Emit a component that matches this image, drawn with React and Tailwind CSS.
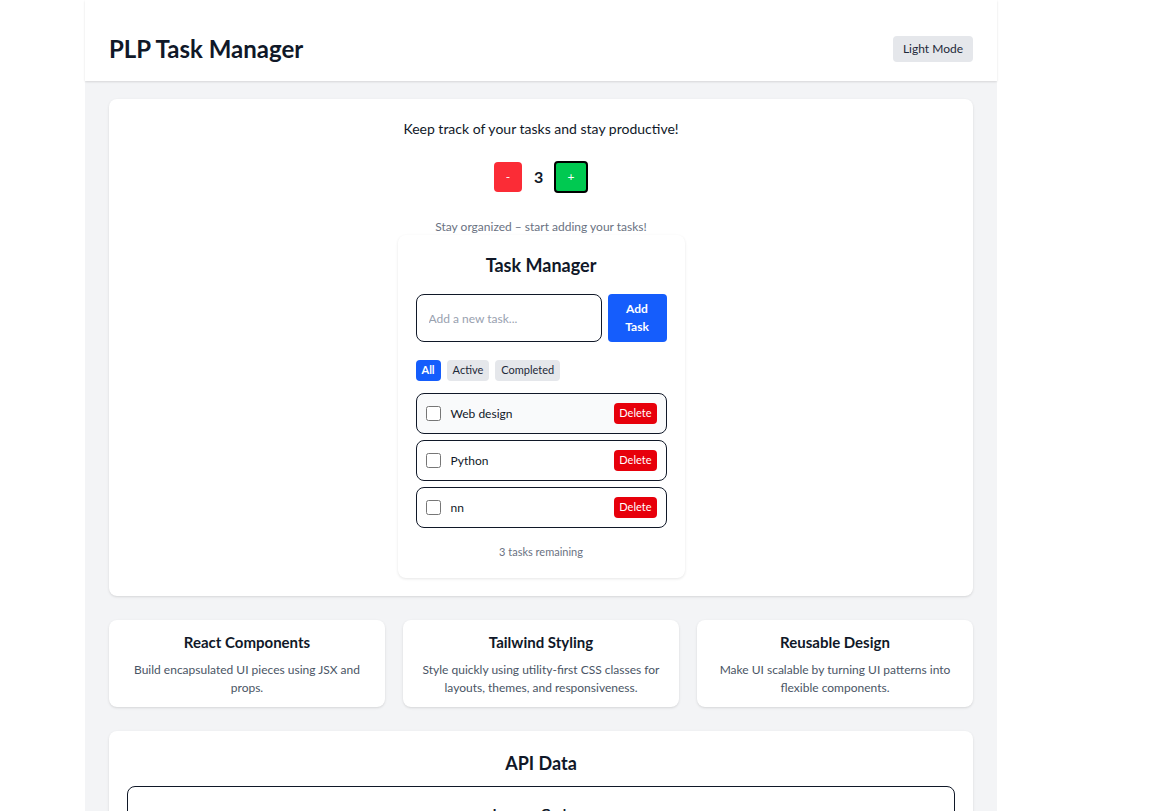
import { useState } from 'react'

const FEATURES = [
  { title: 'React Components', desc: 'Build encapsulated UI pieces using JSX and props.' },
  { title: 'Tailwind Styling', desc: 'Style quickly using utility-first CSS classes for layouts, themes, and responsiveness.' },
  { title: 'Reusable Design', desc: 'Make UI scalable by turning UI patterns into flexible components.' },
]

const TASKS = [
  { id: 1, text: 'Web design', hover: true },
  { id: 2, text: 'Python' },
  { id: 3, text: 'nn' },
]

export default function App() {
  const [count, setCount] = useState(3)

  return (
    <div className="min-h-screen bg-white text-gray-900" style={{ fontFamily: 'Lato, "Noto Sans", sans-serif' }}>
      <div className="ml-[85px] w-[912px] bg-gray-100">
        {/* header */}
        <header className="h-[81px] pt-[17px] bg-white shadow-[0_1px_2px_rgba(0,0,0,0.12)] px-6 flex items-center justify-between">
          <h1 className="text-[24px] font-bold text-gray-900">PLP Task Manager</h1>
          <button className="h-[26px] px-[10px] rounded bg-gray-200 text-[12px] text-gray-800">Light Mode</button>
        </header>

        <main className="px-6 pt-[18px] pb-6 space-y-6">
          {/* top card */}
          <section className="bg-white rounded-lg shadow-sm pt-[20px] pb-[18px] flex flex-col items-center">
            <p className="text-[14px] leading-5">Keep track of your tasks and stay productive!</p>

            <div className="mt-[22px] flex items-center gap-3">
              <button onClick={() => setCount(count - 1)} className="w-[28px] h-[30px] rounded bg-red-500 text-white text-xs">-</button>
              <span className="text-[16px] font-bold w-[8px] text-center">{count}</span>
              <button onClick={() => setCount(count + 1)} className="w-[34px] h-[32px] rounded border-2 border-black bg-green-500 text-white text-xs">+</button>
            </div>

            <p className="mt-[25px] text-[12px] text-gray-500">Stay organized – start adding your tasks!</p>

            {/* task manager */}
            <div className="w-[287px] bg-white rounded-lg shadow-[0_1px_3px_rgba(0,0,0,0.1)] px-[18px] pt-[17px] pb-[17px] -mt-[1px]">
              <h2 className="text-center text-[18px] font-bold">Task Manager</h2>
              <div className="mt-[15px] flex gap-[6px]">
                <input placeholder="Add a new task..." className="w-[186px] h-[48px] rounded-lg border border-gray-900 px-3 text-[12px] placeholder:text-gray-400 outline-none" />
                <button className="flex-1 h-[48px] rounded bg-blue-600 text-white text-[12px] font-bold leading-[18px]">Add<br />Task</button>
              </div>

              <div className="mt-[18px] flex gap-[6px] text-[11px]">
                <button className="h-[21px] px-[6px] rounded bg-blue-600 text-white font-bold">All</button>
                <button className="h-[21px] px-[6px] rounded bg-gray-200 text-gray-800">Active</button>
                <button className="h-[21px] px-[6px] rounded bg-gray-200 text-gray-800">Completed</button>
              </div>

              <ul className="mt-[12px] space-y-[6px]">
                {TASKS.map((t) => (
                  <li key={t.id} className={`h-[41px] rounded-lg border border-gray-900 flex items-center px-[9px] ${t.hover ? 'bg-gray-50' : 'bg-white'}`}>
                    <input type="checkbox" className="w-[15px] h-[15px] m-0" />
                    <span className="ml-[10px] text-[12px] flex-1">{t.text}</span>
                    <button className="h-[21px] px-[5px] rounded bg-red-600 text-white text-[11px]">Delete</button>
                  </li>
                ))}
              </ul>

              <p className="mt-[16px] text-center text-[11px] text-gray-500">3 tasks remaining</p>
            </div>
          </section>

          {/* feature cards */}
          <div className="grid grid-cols-3 gap-[18px]">
            {FEATURES.map((f) => (
              <div key={f.title} className="bg-white rounded-lg shadow-sm h-[87px] px-4 pt-[12px] text-center">
                <h3 className="text-[15px] font-bold leading-5">{f.title}</h3>
                <p className="mt-[9px] text-[12px] leading-[18px] text-gray-600">{f.desc}</p>
              </div>
            ))}
          </div>

          {/* api data */}
          <section className="bg-white rounded-lg shadow-sm px-[18px] pt-[20px] pb-6">
            <h2 className="text-center text-[18px] font-bold leading-6">API Data</h2>
            <div className="mt-[11px] rounded-lg border border-gray-900 p-4 text-center">
              <h3 className="text-[14px] font-bold">Leanne Graham</h3>
              <p className="text-[12px] text-gray-600">Sincere@april.biz</p>
            </div>
          </section>
        </main>
      </div>
    </div>
  )
}
